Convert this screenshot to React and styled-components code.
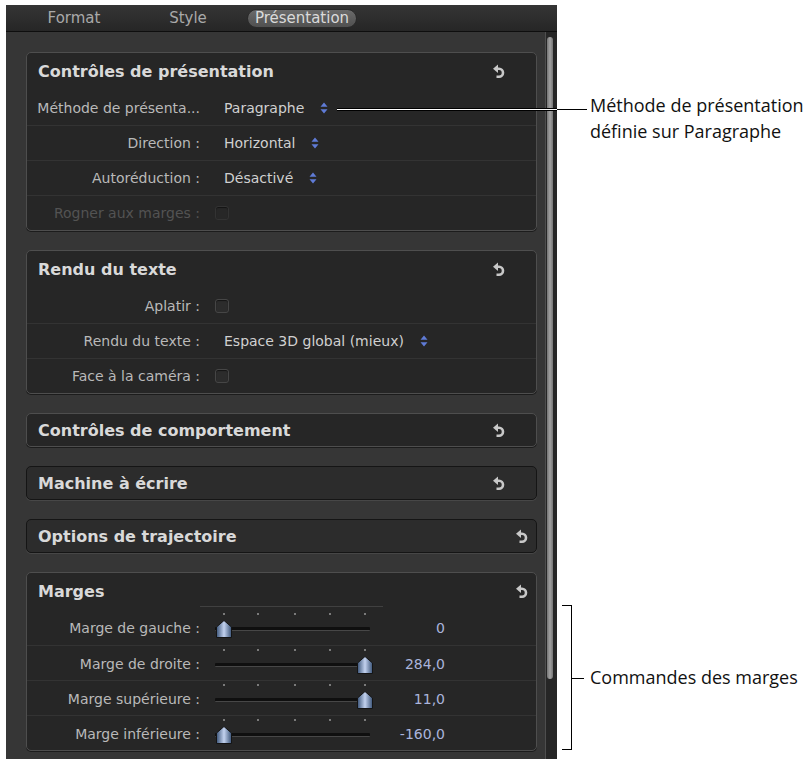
import styled, { createGlobalStyle } from "styled-components";

const GlobalStyle = createGlobalStyle`
  html, body {
    margin: 0;
    padding: 0;
    background: #ffffff;
  }
  body {
    font-family: "DejaVu Sans", "Liberation Sans", sans-serif;
  }
`;

const Page = styled.div`
  position: relative;
  width: 807px;
  height: 762px;
  padding: 5px 0 0 6px;
  box-sizing: border-box;
  overflow: hidden;
`;

const Inspector = styled.div`
  width: 551px;
  height: 754px;
  background: #363636;
  display: flex;
  flex-direction: column;
  overflow: hidden;
`;

const TabBar = styled.div`
  flex: none;
  height: 26px;
  display: flex;
  align-items: center;
  padding-left: 11px;
  background: linear-gradient(#353535, #262626);
  border-bottom: 1px solid #0e0e0e;
`;

const Tab = styled.div`
  width: 114px;
  display: flex;
  justify-content: center;
  font-size: 15px;
  color: #a9a9a9;
`;

const ActivePill = styled.span`
  width: 110px;
  height: 19px;
  box-sizing: border-box;
  display: flex;
  align-items: center;
  justify-content: center;
  border-radius: 10px;
  background: linear-gradient(#6a6a6a, #505050);
  border: 1px solid #2a2a2a;
  color: #dadada;
`;

const Body = styled.div`
  flex: 1;
  display: flex;
  min-height: 0;
`;

const PanelColumn = styled.div`
  width: 511px;
  padding: 20px 8px 0 20px;
  display: flex;
  flex-direction: column;
  gap: 19px;
`;

const ScrollTrack = styled.div`
  width: 12px;
  background: #262626;
  border-left: 1px solid #4e4e4e;
  box-sizing: border-box;
  padding: 5px 0 0 1px;
`;

const ScrollThumb = styled.div`
  width: 6px;
  height: 642px;
  border-radius: 3px;
  background: linear-gradient(to right, #747474, #a2a2a2 50%, #747474);
`;

const Panel = styled.section`
  border-radius: 5px;
  background: ${(p) => (p.$sunken ? "#2c2c2c" : "#262626")};
  border: 1px solid ${(p) => (p.$sunken ? "#151515" : "#4e4e4e")};
  box-shadow: ${(p) => (p.$sunken ? "0 1px 0 #474747" : "0 1px 0 #1c1c1c")};
`;

const PanelHeader = styled.header`
  height: ${(p) => (p.$collapsed ? 32 : 37)}px;
  display: flex;
  align-items: center;
  justify-content: space-between;
  padding: 0 ${(p) => (p.$edgeReset ? 8 : 31)}px 0 11px;
  font-size: 16px;
  font-weight: bold;
  color: #d9d9d9;
`;

const Row = styled.div`
  position: relative;
  height: 35px;
  box-sizing: border-box;
  display: grid;
  grid-template-columns: 173px auto;
  column-gap: 15px;
  align-items: center;
  font-size: 14px;

  & + & {
    border-top: 1px solid #333333;
  }
`;

const Label = styled.span`
  text-align: right;
  white-space: nowrap;
  color: ${(p) => (p.$disabled ? "#535353" : "#b9b9b9")};
`;

const Popup = styled.span`
  display: flex;
  align-items: center;
  gap: 16px;
  padding-left: 9px;
  color: #d0d0d0;
`;

const Checkbox = styled.span`
  width: 14px;
  height: 14px;
  box-sizing: border-box;
  border-radius: 3px;
  background: ${(p) => (p.$disabled ? "#272727" : "#2c2c2c")};
  border: 1px solid ${(p) => (p.$disabled ? "#333333" : "#464646")};
  box-shadow: inset 0 1px 1px #151515;
`;

const SliderCell = styled.div`
  display: grid;
  grid-template-columns: 170px 60px;
  align-items: center;
`;

const Slider = styled.div`
  position: relative;
  height: 35px;

  ${(p) =>
    p.$ruled &&
    `&::before {
      content: "";
      position: absolute;
      left: -15px;
      top: -4px;
      width: 183px;
      height: 1px;
      background: #404040;
    }`}
`;

const Groove = styled.span`
  position: absolute;
  left: 0;
  top: 17px;
  width: 155px;
  height: 3px;
  background: #0f0f0f;
  border-bottom: 1px solid #474747;
  border-radius: 1px;
`;

const Tick = styled.span`
  position: absolute;
  top: 3px;
  width: 2px;
  height: 2px;
  background: #7a7a7a;
`;

const Thumb = styled.svg`
  position: absolute;
  top: 10px;
`;

const Amount = styled.span`
  text-align: right;
  color: #aab4dc;
`;

const Callout = styled.div`
  position: absolute;
  left: 337px;
  top: 109px;
  display: flex;
`;

const LeaderOnDark = styled.span`
  width: 220px;
  height: 1px;
  background: #ffffff;
  box-shadow: 0 1px 0 #000, 0 -1px 0 #000;
`;

const LeaderOnLight = styled.span`
  width: 30px;
  height: 1px;
  background: #000000;
`;

const Note = styled.div`
  position: absolute;
  left: 590px;
  top: ${(p) => p.$top}px;
  font-family: "Open Sans", "Liberation Sans", sans-serif;
  font-size: 18px;
  line-height: 26px;
  color: #111111;
  white-space: nowrap;
`;

const Bracket = styled.div`
  position: absolute;
  left: 562px;
  top: 605px;
  width: 10px;
  height: 145px;
  box-sizing: border-box;
  border: 1px solid #000;
  border-left: none;

  &::after {
    content: "";
    position: absolute;
    left: 100%;
    top: 72px;
    width: 13px;
    height: 1px;
    background: #000;
  }
`;

const UndoIcon = () => (
  <svg width="12" height="15" viewBox="0 0 12 15">
    <path d="M4 4.8 H6 A4 4 0 0 1 6 12.8 H3.5" fill="none" stroke="#c8c8c8" strokeWidth="2.6" />
    <path d="M0 4.8 L5 0.6 V9 Z" fill="#c8c8c8" />
  </svg>
);

const Stepper = () => (
  <svg width="8" height="12" viewBox="0 0 8 12">
    <path d="M4 0.5 L7.5 4.8 H0.5 Z M0.5 7.2 H7.5 L4 11.5 Z" fill="#5f7bd6" />
  </svg>
);

const TICKS = [9, 43, 80, 115, 150];

function MarginSlider({ pos, ruled }) {
  return (
    <Slider $ruled={ruled}>
      {TICKS.map((x) => (
        <Tick key={x} style={{ left: x - 1 }} />
      ))}
      <Groove />
      <Thumb width="16" height="18" viewBox="0 0 16 18" style={{ left: pos - 8 }}>
        <defs>
          <linearGradient id="thumbFill" x1="0" x2="1">
            <stop offset="0" stopColor="#3b5478" />
            <stop offset="0.5" stopColor="#c3d2ef" />
            <stop offset="1" stopColor="#3b5478" />
          </linearGradient>
        </defs>
        <path d="M8 0.5 L15.5 7 V17.5 H0.5 V7 Z" fill="url(#thumbFill)" stroke="#141414" />
      </Thumb>
    </Slider>
  );
}

function PopupRow({ label, value }) {
  return (
    <Row>
      <Label>{label}</Label>
      <Popup>
        {value}
        <Stepper />
      </Popup>
    </Row>
  );
}

function CheckRow({ label, disabled }) {
  return (
    <Row>
      <Label $disabled={disabled}>{label}</Label>
      <Checkbox $disabled={disabled} />
    </Row>
  );
}

function SliderRow({ label, pos, value, ruled }) {
  return (
    <Row>
      <Label>{label}</Label>
      <SliderCell>
        <MarginSlider pos={pos} ruled={ruled} />
        <Amount>{value}</Amount>
      </SliderCell>
    </Row>
  );
}

function Section({ title, collapsed, sunken, edgeReset, children }) {
  return (
    <Panel $sunken={sunken}>
      <PanelHeader $collapsed={collapsed} $edgeReset={edgeReset}>
        {title}
        <UndoIcon />
      </PanelHeader>
      {children}
    </Panel>
  );
}

export default function App() {
  return (
    <Page>
      <GlobalStyle />
      <Inspector>
        <TabBar>
          <Tab>Format</Tab>
          <Tab>Style</Tab>
          <Tab>
            <ActivePill>Présentation</ActivePill>
          </Tab>
        </TabBar>
        <Body>
          <PanelColumn>
            <Section title="Contrôles de présentation">
              <PopupRow label="Méthode de présenta..." value="Paragraphe" />
              <PopupRow label="Direction :" value="Horizontal" />
              <PopupRow label="Autoréduction :" value="Désactivé" />
              <CheckRow label="Rogner aux marges :" disabled />
            </Section>
            <Section title="Rendu du texte">
              <CheckRow label="Aplatir :" />
              <PopupRow label="Rendu du texte :" value="Espace 3D global (mieux)" />
              <CheckRow label="Face à la caméra :" />
            </Section>
            <Section title="Contrôles de comportement" collapsed />
            <Section title="Machine à écrire" collapsed sunken />
            <Section title="Options de trajectoire" collapsed sunken edgeReset />
            <Section title="Marges" edgeReset>
              <SliderRow label="Marge de gauche :" pos={9} value="0" ruled />
              <SliderRow label="Marge de droite :" pos={150} value="284,0" />
              <SliderRow label="Marge supérieure :" pos={150} value="11,0" />
              <SliderRow label="Marge inférieure :" pos={9} value="-160,0" />
            </Section>
          </PanelColumn>
          <ScrollTrack>
            <ScrollThumb />
          </ScrollTrack>
        </Body>
      </Inspector>

      <Callout>
        <LeaderOnDark />
        <LeaderOnLight />
      </Callout>
      <Note $top={92}>
        Méthode de présentation
        <br />
        définie sur Paragraphe
      </Note>
      <Bracket />
      <Note $top={664}>Commandes des marges</Note>
    </Page>
  );
}
